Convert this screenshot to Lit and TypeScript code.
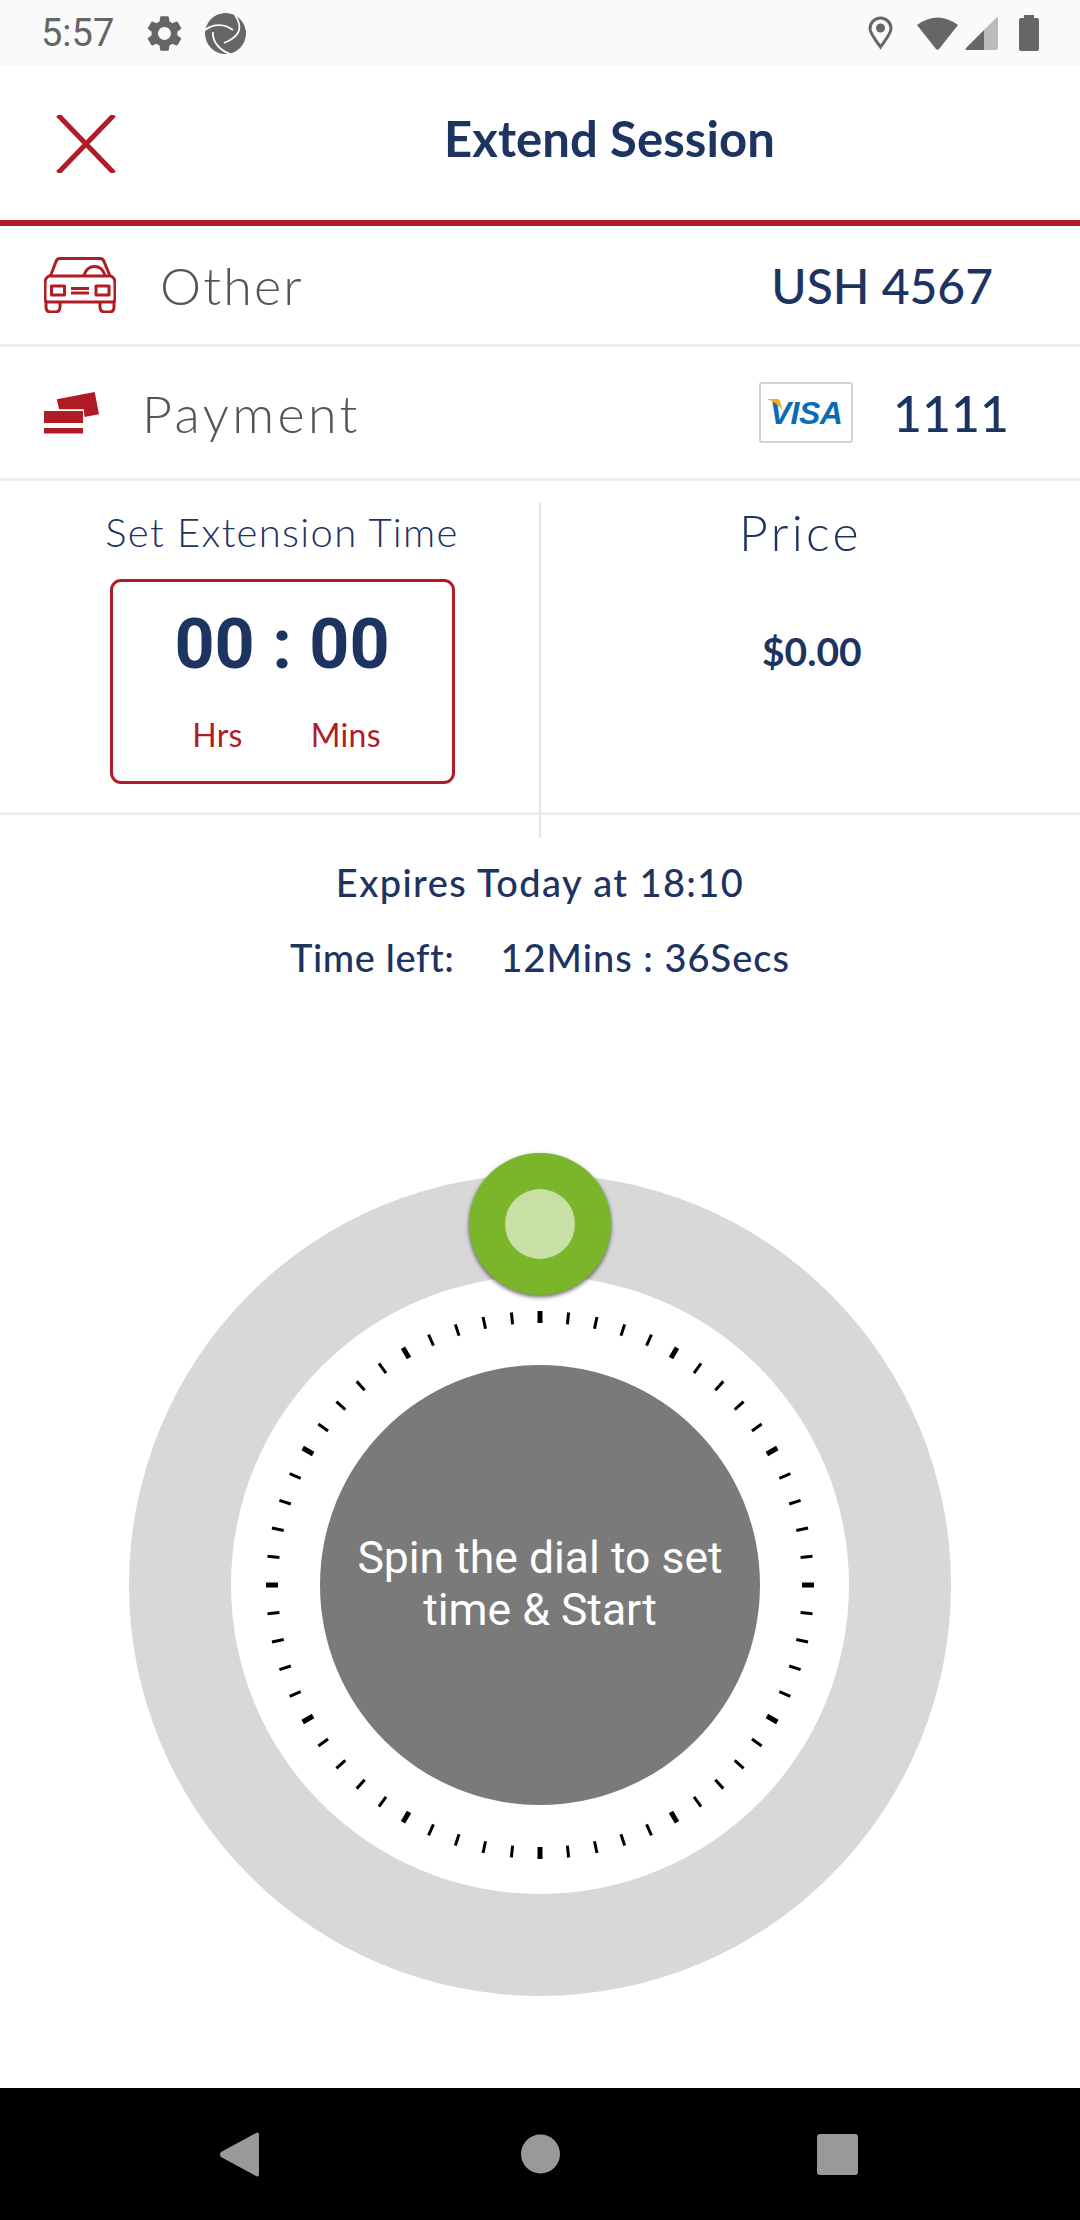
import {LitElement, css, html, svg} from "lit";
import {customElement} from "lit/decorators.js";

const TICKS = Array.from({length: 60}, (_, i) => i * 6);

@customElement("app-root")
export class AppRoot extends LitElement {
  static styles = css`
    :host {
      display: flex;
      flex-direction: column;
      width: 1080px;
      min-height: 2220px;
      background: #fff;
      font-family: "Lato", "Liberation Sans", sans-serif;
      color: #1d3461;
    }
    svg {
      display: block;
      flex: none;
    }

    .status {
      display: flex;
      align-items: center;
      height: 66px;
      padding: 0 41px;
      background: #fafafa;
      color: #666;
      fill: #666;
    }
    .clock {
      font: 400 38px/66px "Roboto", sans-serif;
      width: 72px;
    }
    .gear {
      margin-left: 30px;
    }
    .logo {
      margin-left: 19px;
    }
    .status-right {
      display: flex;
      align-items: center;
      margin-left: auto;
    }
    .wifi {
      margin-left: 24px;
    }
    .signal {
      margin-left: 7px;
    }
    .battery {
      margin-left: 21px;
    }

    .header {
      display: flex;
      align-items: center;
      height: 154px;
      border-bottom: 6px solid #b01c26;
      padding-left: 56px;
    }
    .close {
      margin-top: 2px;
    }
    .title {
      margin-left: 328px;
      margin-top: -10px;
      font-size: 49px;
      font-weight: 700;
      letter-spacing: 0.1px;
      white-space: nowrap;
    }

    .row {
      display: flex;
      align-items: center;
      border-bottom: 3px solid #eee;
      padding-left: 44px;
    }
    .row.vehicle {
      height: 118px;
    }
    .row.payment {
      height: 131px;
    }
    .row-label {
      font-size: 52px;
      font-weight: 300;
      color: #555;
      letter-spacing: 2.2px;
    }
    .vehicle .row-label {
      margin-left: 44px;
    }
    .payment .row-label {
      margin-left: 43px;
      letter-spacing: 3.4px;
    }
    .row-value {
      font-weight: 500;
      white-space: nowrap;
    }
    .vehicle .row-value {
      margin-left: auto;
      margin-right: 87px;
      font-size: 48px;
    }
    .payment .row-value {
      margin-left: 40px;
      margin-right: 71px;
      font-size: 50px;
    }
    .visa {
      position: relative;
      display: flex;
      align-items: center;
      justify-content: center;
      box-sizing: border-box;
      width: 94px;
      height: 61px;
      margin-left: auto;
      border: 2px solid #d2d2d2;
      border-radius: 3px;
      font: italic 700 32px/1 "Liberation Sans", sans-serif;
      color: #0a6cb2;
      letter-spacing: -0.5px;
    }
    .visa svg {
      position: absolute;
      left: 6px;
      top: 15px;
    }

    .time {
      position: relative;
      display: grid;
      grid-template-columns: 540px 540px;
      height: 331px;
      border-bottom: 3px solid #eee;
    }
    .time::after {
      content: "";
      position: absolute;
      left: 539px;
      top: 22px;
      width: 2px;
      height: 335px;
      background: #e4e4e4;
    }
    .set-col {
      display: flex;
      flex-direction: column;
      align-items: center;
      padding: 26px 0 0 24px;
    }
    .col-title {
      font-size: 40px;
      line-height: 50px;
      font-weight: 300;
      letter-spacing: 1.3px;
      white-space: nowrap;
    }
    .box {
      box-sizing: border-box;
      width: 345px;
      height: 205px;
      margin-top: 22px;
      border: 3px solid #b01c26;
      border-radius: 11px;
      text-align: center;
    }
    .digits {
      margin-top: 21px;
      font: 700 70px/82px "Roboto", sans-serif;
      white-space: pre;
    }
    .units {
      display: flex;
      justify-content: center;
      gap: 68px;
      margin-top: 30px;
      padding-left: 9px;
      font-size: 32px;
      line-height: 40px;
      letter-spacing: 0.3px;
      color: #b01c26;
    }
    .price-col {
      display: flex;
      flex-direction: column;
      padding-top: 26px;
    }
    .price-title {
      margin-left: 199px;
      font-size: 50px;
      line-height: 50px;
      font-weight: 300;
      letter-spacing: 3.3px;
    }
    .price {
      margin-left: 222px;
      margin-top: 69px;
      font-size: 39px;
      line-height: 50px;
      font-weight: 700;
    }

    .info {
      padding-top: 30px;
      text-align: center;
      font-size: 38px;
      line-height: 75px;
      font-weight: 500;
      letter-spacing: 1.4px;
    }
    .left-line {
      display: flex;
      justify-content: center;
      gap: 46px;
      letter-spacing: 1px;
    }
    .left-line span:first-child {
      letter-spacing: 0.6px;
    }

    .dial {
      position: relative;
      display: flex;
      align-items: center;
      justify-content: center;
      flex: none;
      width: 822px;
      height: 822px;
      margin: 179px auto 0;
      border-radius: 50%;
      background: #d8d8d8;
    }
    .dial-inner {
      position: relative;
      display: flex;
      align-items: center;
      justify-content: center;
      width: 618px;
      height: 618px;
      border-radius: 50%;
      background: #fff;
    }
    .ticks {
      position: absolute;
      left: 0;
      top: 0;
    }
    .core {
      position: relative;
      display: flex;
      align-items: center;
      justify-content: center;
      box-sizing: border-box;
      width: 440px;
      height: 440px;
      padding-bottom: 2px;
      border-radius: 50%;
      background: #7a7a7a;
      color: #fff;
      font: 400 44.5px/52px "Roboto", sans-serif;
      text-align: center;
    }
    .knob {
      position: absolute;
      left: 340px;
      top: -21px;
      display: flex;
      align-items: center;
      justify-content: center;
      width: 142px;
      height: 142px;
      border-radius: 50%;
      background: #7ab52a;
      box-shadow: 0 2px 4px rgba(0, 0, 0, 0.6);
    }
    .knob-dot {
      width: 70px;
      height: 70px;
      border-radius: 50%;
      background: #c8e0a6;
    }

    .nav {
      position: relative;
      height: 132px;
      margin-top: auto;
      background: #000;
      fill: #999;
    }
    .nav svg {
      position: absolute;
      left: 0;
      top: 0;
    }
  `;

  renderStatus() {
    return html`
      <div class="status">
        <span class="clock">5:57</span>
        <svg class="gear" width="43" height="43" viewBox="0 0 24 24"><path d="M19.14 12.94c.04-.3.06-.61.06-.94 0-.32-.02-.64-.07-.94l2.03-1.58a.49.49 0 0 0 .12-.61l-1.92-3.32a.488.488 0 0 0-.59-.22l-2.39.96c-.5-.38-1.03-.7-1.62-.94l-.36-2.54a.484.484 0 0 0-.48-.41h-3.84c-.24 0-.43.17-.47.41l-.36 2.54c-.59.24-1.13.57-1.62.94l-2.39-.96c-.22-.08-.47 0-.59.22L2.74 8.87c-.12.21-.08.47.12.61l2.03 1.58c-.05.3-.09.63-.09.94s.02.64.07.94l-2.03 1.58a.49.49 0 0 0-.12.61l1.92 3.32c.12.22.37.29.59.22l2.39-.96c.5.38 1.03.7 1.62.94l.36 2.54c.05.24.24.41.48.41h3.84c.24 0 .44-.17.47-.41l.36-2.54c.59-.24 1.13-.56 1.62-.94l2.39.96c.22.08.47 0 .59-.22l1.92-3.32c.12-.22.07-.47-.12-.61l-2.01-1.58zM12 15.6c-1.98 0-3.6-1.62-3.6-3.6s1.62-3.6 3.6-3.6 3.6 1.62 3.6 3.6-1.62 3.6-3.6 3.6z"/></svg>
        <svg class="logo" width="41" height="41" viewBox="0 0 41 41">
          <circle cx="20.5" cy="20.5" r="20.5"/>
          <g fill="none" stroke="#fafafa" stroke-width="1.8">
            <path d="M30 2c8 12 6 21-11 28"/>
            <path d="M0 17c9-7 20-6 28 0"/>
            <path d="M8 19c-1 9 6 18 17 22"/>
          </g>
        </svg>
        <div class="status-right">
          <svg width="25" height="34" viewBox="0 0 25 34">
            <path fill="none" stroke="#666" stroke-width="3" d="M12.5 31C7 23 2 17.5 2 12.5a10.500 10.500 0 0 1 21 0C23 17.500 18 23 12.500 31z"/>
            <circle cx="12.500" cy="12" r="4.500"/>
          </svg>
          <svg class="wifi" width="41" height="33" viewBox="0 0 41 33"><path d="M0 8Q20.500-7 41 8L22 32q-1.500 1.500-3 0z"/></svg>
          <svg class="signal" width="33" height="33" viewBox="0 0 33 33">
            <path fill="#bbb" d="M32 0q1 0 1 2v29q0 2-2 2H19V13z"/>
            <path d="M19 13v20H2q-2 0-1-2z"/>
          </svg>
          <svg class="battery" width="20" height="36" viewBox="0 0 20 36"><path d="M5 0h10v3h3q2 0 2 2v29q0 2-2 2H2q-2 0-2-2V5q0-2 2-2h3z"/></svg>
        </div>
      </div>
    `;
  }

  renderDial() {
    return html`
      <div class="dial">
        <div class="dial-inner">
          <svg class="ticks" width="618" height="618" viewBox="-309 -309 618 618">
            ${TICKS.map(
              (deg) => svg`<line x1="0" x2="0" y1="-274" y2="-262" stroke="#000"
                stroke-width=${deg % 30 === 0 ? 5 : 3} transform="rotate(${deg})"/>`
            )}
          </svg>
          <div class="core">Spin the dial to set<br />time &amp; Start</div>
        </div>
        <div class="knob"><div class="knob-dot"></div></div>
      </div>
    `;
  }

  render() {
    return html`
      ${this.renderStatus()}
      <div class="header">
        <svg class="close" width="60" height="58" viewBox="0 0 60 58">
          <path fill="none" stroke="#b01c26" stroke-width="5" d="M2 0l56 58M58 0L2 58"/>
        </svg>
        <div class="title">Extend Session</div>
      </div>

      <div class="row vehicle">
        <svg width="72" height="56" viewBox="0 0 72 56" fill="none" stroke="#b01c26" stroke-width="3" stroke-linejoin="round">
          <path d="M6.500 19L12 4.500Q13 1.500 16 1.500H56Q59 1.500 60 4.500L66 19"/>
          <path d="M5 19H67Q71 21 71 26V42Q71 45 68 45H4Q1 45 1 42V26Q1 21 5 19z"/>
          <path d="M40 18Q43 9.500 50.500 9.500T61 18"/>
          <rect x="7.500" y="29" width="13" height="9"/>
          <rect x="52" y="29" width="13" height="9"/>
          <path d="M27 31.500H45M27 36H45"/>
          <path d="M2 45V50Q2 55 7 55H11Q16 55 16 50V45M56 45V50Q56 55 61 55H65Q70 55 70 50V45"/>
        </svg>
        <span class="row-label">Other</span>
        <span class="row-value">USH 4567</span>
      </div>

      <div class="row payment">
        <svg width="55" height="42" viewBox="0 0 55 42" fill="#b01c26">
          <path d="M12.800 7.300L50.700 0L55 22.300L40.500 25L39.700 17.300H15z"/>
          <rect y="19" width="39" height="12"/>
          <rect y="36" width="39" height="5.500"/>
        </svg>
        <span class="row-label">Payment</span>
        <div class="visa">
          VISA
          <svg width="16" height="12" viewBox="0 0 16 12"><path fill="#f4a91f" d="M0 0H11Q14 2 15 11Q9 3 0 0z"/></svg>
        </div>
        <span class="row-value">1111</span>
      </div>

      <div class="time">
        <div class="set-col">
          <div class="col-title">Set Extension Time</div>
          <div class="box">
            <div class="digits">00 : 00</div>
            <div class="units"><span>Hrs</span><span>Mins</span></div>
          </div>
        </div>
        <div class="price-col">
          <div class="price-title">Price</div>
          <div class="price">$0.00</div>
        </div>
      </div>

      <div class="info">
        <div>Expires Today at 18:10</div>
        <div class="left-line"><span>Time left:</span><span>12Mins : 36Secs</span></div>
      </div>

      ${this.renderDial()}

      <div class="nav">
        <svg width="1080" height="132" viewBox="0 0 1080 132">
          <path d="M257 44.500Q259 44 259 47V86Q259 89 257 88.500L221 69Q219 66.500 221 64z"/>
          <circle cx="540.500" cy="66" r="19.500"/>
          <rect x="817" y="46" width="41" height="41" rx="3"/>
        </svg>
      </div>
    `;
  }
}
